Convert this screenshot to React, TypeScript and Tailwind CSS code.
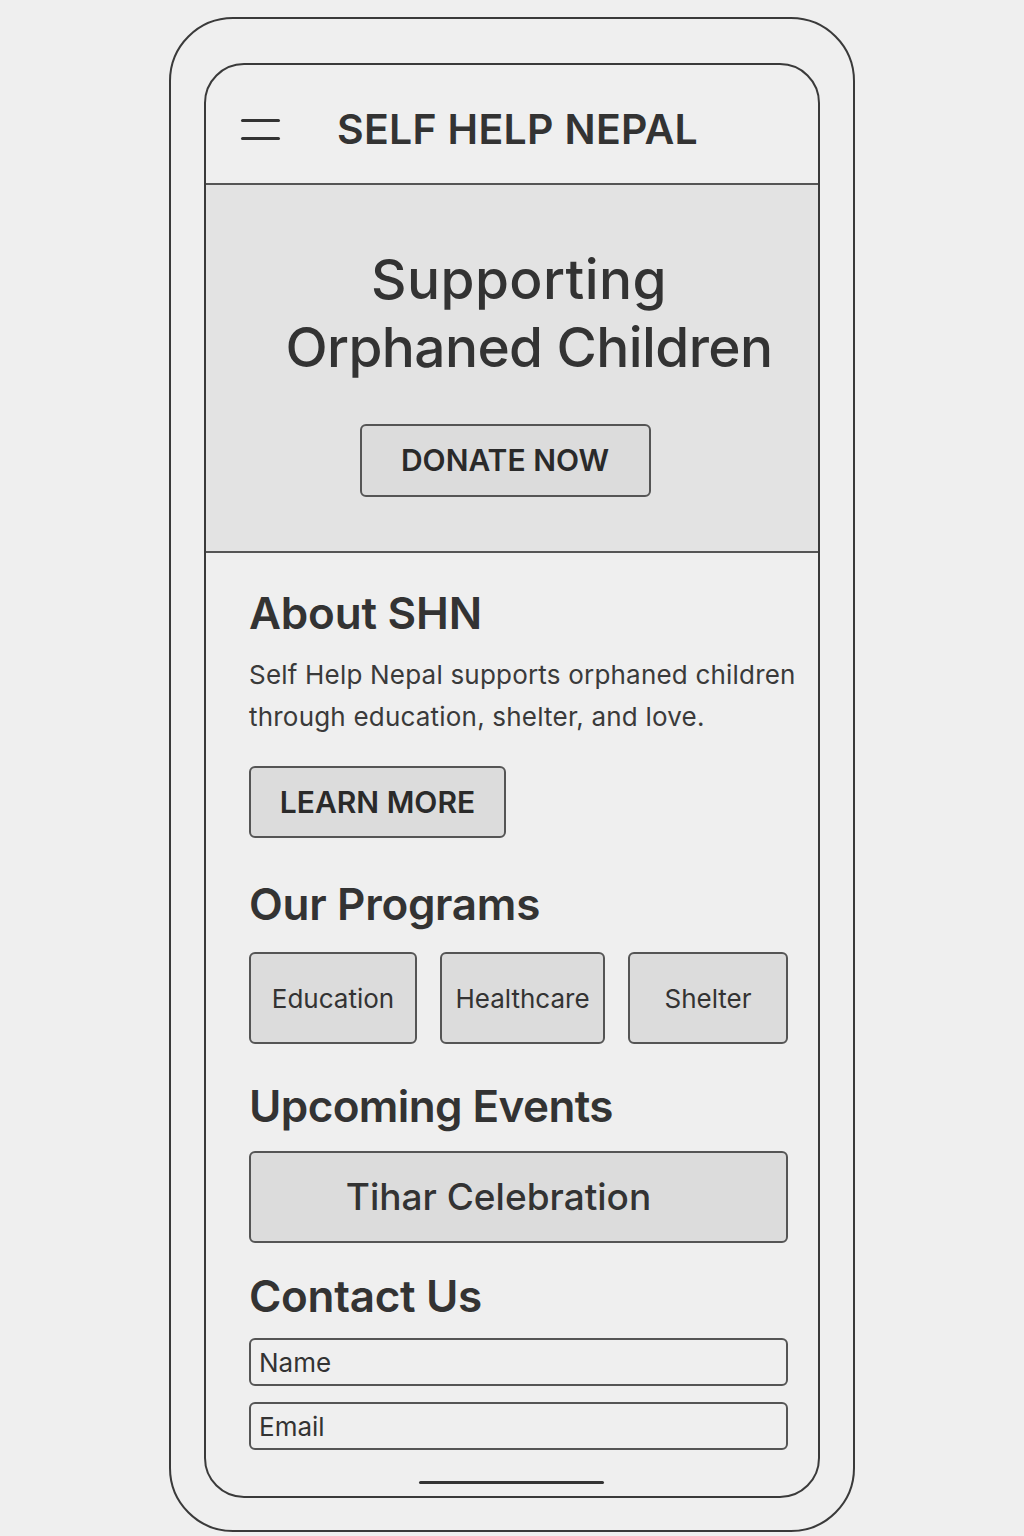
import React from "react";

const font = { fontFamily: "Inter, 'Noto Sans', sans-serif" };

export default function App() {
  return (
    <div
      className="w-[1024px] h-[1536px] bg-[#efefef] flex justify-center pt-[17px] text-[#333333]"
      style={font}
    >
      <div className="w-[686px] h-[1515px] border-2 border-[#3a3a3a] rounded-[64px] pt-[44px] px-[33px]">
        <div className="relative w-[616px] h-[1435px] border-2 border-[#3a3a3a] rounded-[40px] overflow-hidden flex flex-col">
          {/* header */}
          <div className="h-[120px] shrink-0 border-b-2 border-[#555] flex items-center pl-[35px] pt-[10px]">
            <div className="flex flex-col gap-[15px] w-[39px]">
              <div className="h-[3px] bg-[#333] rounded-full" />
              <div className="h-[3px] bg-[#333] rounded-full" />
            </div>
            <div className="ml-[57px] text-[41px] font-semibold leading-none tracking-[0.3px] text-[#333]">
              SELF HELP NEPAL
            </div>
          </div>

          {/* hero */}
          <div className="h-[368px] shrink-0 bg-[#e3e3e3] border-b-2 border-[#555] flex flex-col items-center pt-[60px]">
            <h1 className="flex flex-col items-center text-[55px] font-medium leading-[68px] tracking-[-0.6px] text-[#333]">
              <span className="pl-[14px] tracking-[0.4px]">Supporting</span>
              <span className="pl-[34px]">Orphaned Children</span>
            </h1>
            <button className="mt-[43px] w-[291px] h-[73px] bg-[#dcdcdc] border-2 border-[#555] rounded-[6px] text-[30px] font-semibold text-[#2a2a2a] -ml-[14px]">
              DONATE NOW
            </button>
          </div>

          {/* content */}
          <div className="pl-[43px] pr-[29px] pt-[38px] flex flex-col">
            <h2 className="text-[44px] font-semibold leading-[44px] tracking-[-0.2px] text-[#333]">About SHN</h2>
            <p className="mt-[19px] text-[26px] leading-[42px] tracking-[0.2px] text-[#3a3a3a] -mr-[10px]">
              Self Help Nepal supports orphaned children through education, shelter, and love.
            </p>
            <button className="mt-[28px] w-[257px] h-[72px] bg-[#dcdcdc] border-2 border-[#555] rounded-[6px] text-[30px] font-semibold text-[#2a2a2a]">
              LEARN MORE
            </button>

            <h2 className="mt-[44px] text-[44px] font-semibold leading-[44px] tracking-[-0.3px] text-[#333]">Our Programs</h2>
            <div className="mt-[26px] flex gap-[23px] w-[539px]">
              {[
                ["Education", "w-[168px]"],
                ["Healthcare", "w-[165px]"],
                ["Shelter", "w-[160px]"],
              ].map(([t, w]) => (
                <div
                  key={t}
                  className={`${w} h-[92px] bg-[#dcdcdc] border-2 border-[#555] rounded-[6px] flex items-center justify-center text-[26px] text-[#333]`}
                >
                  {t}
                </div>
              ))}
            </div>

            <h2 className="mt-[40px] text-[44px] font-semibold leading-[44px] tracking-[-0.6px] text-[#333]">Upcoming Events</h2>
            <div className="mt-[23px] w-[539px] h-[92px] bg-[#dcdcdc] border-2 border-[#555] rounded-[6px] flex items-center justify-center text-[37px] font-medium text-[#333] pr-[40px]">
              Tihar Celebration
            </div>

            <h2 className="mt-[31px] text-[44px] font-semibold leading-[44px] tracking-[-0.3px] text-[#333]">Contact Us</h2>
            <div className="mt-[20px] w-[539px] h-[48px] border-2 border-[#555] rounded-[6px] flex items-center pl-[8px] text-[26px] text-[#333]">
              Name
            </div>
            <div className="mt-[16px] w-[539px] h-[48px] border-2 border-[#555] rounded-[6px] flex items-center pl-[8px] text-[26px] text-[#333]">
              Email
            </div>
          </div>

          <div className="absolute left-[213px] bottom-[12px] w-[185px] h-[3px] bg-[#333] rounded-full" />
        </div>
      </div>
    </div>
  );
}
